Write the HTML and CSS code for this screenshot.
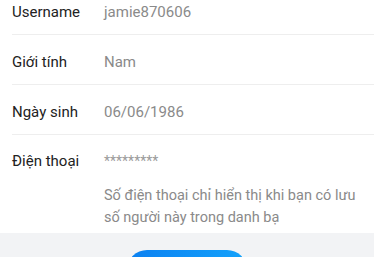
FILE: index.html
```html
<!DOCTYPE html>
<html>
<head><meta charset="utf-8"><link rel="stylesheet" href="styles.css"></head>
<body>
<div class="info">
  <div class="row first"><span class="label">Username</span><span class="value">jamie870606</span></div>
  <div class="row"><span class="label">Giới tính</span><span class="value">Nam</span></div>
  <div class="row"><span class="label">Ngày sinh</span><span class="value">06/06/1986</span></div>
  <div class="row phone">
    <span class="label">Điện thoại</span>
    <div class="phone-col">
      <span class="stars">*********</span>
      <p class="note">Số điện thoại chỉ hiển thị khi bạn có lưu số người này trong danh bạ</p>
    </div>
  </div>
</div>
<div class="footer"><button class="btn"></button></div>
</body>
</html>
```
FILE: styles.css
```css
html, body { margin: 0; padding: 0; background: #fff; }
body { font-family: Roboto, "Noto Sans", sans-serif; width: 374px; height: 257px; overflow: hidden; }
.info { margin-top: -15px; }
.row { box-sizing: border-box; display: flex; align-items: center; height: 50px; padding-top: 4px; margin-left: 12px; border-bottom: 1px solid #eeeeee; }
.label { width: 92px; font-size: 15px; color: #222; flex: none; }
.value { font-size: 15px; color: #8a8a8a; }
.phone { height: auto; align-items: flex-start; border-bottom: none; padding-top: 16px; padding-bottom: 4px; }
.phone .label { line-height: 20px; }
.phone-col { display: flex; flex-direction: column; }
.stars { font-size: 14px; color: #9a9a9a; line-height: 20px; }
.note { margin: 14px 0 0; font-size: 14.5px; line-height: 22px; color: #8a8a8a; width: 258px; }
.footer { box-sizing: border-box; background: #f2f3f5; height: 24px; overflow: hidden; display: flex; justify-content: center; align-items: flex-start; padding-top: 17px; }
.btn { flex: none; width: 120px; height: 40px; border: none; border-radius: 20px; background: linear-gradient(90deg, #0b80f1, #14a2fb); padding: 0; }
```
